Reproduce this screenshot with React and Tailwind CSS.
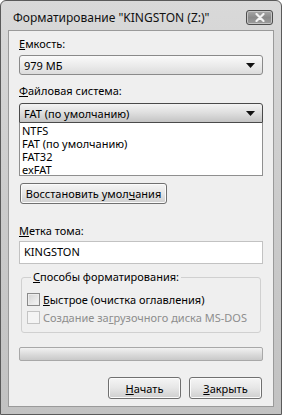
import { useState } from "react";

const font = { fontFamily: '"Noto Sans", "Open Sans", sans-serif' };

function ArrowDown() {
  return (
    <svg width="9" height="5" viewBox="0 0 9 5" className="shrink-0">
      <path d="M0 0 H9 L4.5 5 Z" fill="#111" />
    </svg>
  );
}

function Combo({ value, open }) {
  return (
    <div
      className={
        "flex h-[20px] items-center justify-between rounded-[3px] border pl-[4px] pr-[7px] " +
        (open
          ? "rounded-b-none border-[#4a4a4a] bg-gradient-to-b from-[#f4f4f4] via-[#dedede] to-[#c4c4c4]"
          : "border-[#8a8a8a] bg-gradient-to-b from-[#fafafa] via-[#ececec] to-[#dcdcdc]")
      }
    >
      <span className="whitespace-nowrap text-[11px] leading-none text-black">{value}</span>
      <ArrowDown />
    </div>
  );
}

function Button({ children, className = "" }) {
  return (
    <button
      className={
        "flex items-center justify-center whitespace-nowrap rounded-[3px] border border-[#707070] bg-gradient-to-b from-[#f5f5f5] via-[#e6e6e6] to-[#cfcfcf] text-[11px] leading-none text-black shadow-[inset_0_0_0_1px_#fbfbfb] " +
        className
      }
    >
      <span>{children}</span>
    </button>
  );
}

function Checkbox({ label, disabled, checked, onChange }) {
  return (
    <label className="flex h-[16px] items-center gap-[3px] whitespace-nowrap">
      <span
        onClick={disabled ? undefined : onChange}
        className={
          "h-[13px] w-[13px] shrink-0 border " +
          (disabled
            ? "border-[#c4c4c4] bg-[#f4f4f4]"
            : "border-[#8a8a8a] bg-gradient-to-br from-[#d4d4d4] to-[#f6f6f6] shadow-[inset_0_0_0_1px_#ececec]")
        }
      >
        {checked && (
          <svg width="11" height="11" viewBox="0 0 11 11">
            <path d="M2 5.5 L4.5 8 L9 2.5" stroke="#222" strokeWidth="1.6" fill="none" />
          </svg>
        )}
      </span>
      <span className={"text-[11px] leading-none " + (disabled ? "text-[#8d8d8d]" : "text-black")}>
        {label}
      </span>
    </label>
  );
}

export default function App() {
  const [quick, setQuick] = useState(false);
  const options = ["NTFS", "FAT (по умолчанию)", "FAT32", "exFAT"];

  return (
    <div
      style={font}
      className="flex h-[415px] w-[282px] flex-col rounded-t-[6px] border border-[#5a5a5a] bg-gradient-to-b from-[#d9d9d9] via-[#cbcbcb] to-[#c2c2c2]"
    >
      {/* title bar */}
      <div className="flex h-[29px] items-center justify-between pl-[12px] pr-[8px] pt-[4px]">
        <span className="whitespace-nowrap text-[12px] leading-none text-[#111]">Форматирование "KINGSTON (Z:)"</span>
        <div className="flex h-[15px] w-[27px] items-center justify-center rounded-[3px] border border-[#4d4d4d] bg-gradient-to-b from-[#a8a8a8] via-[#8a8a8a] to-[#9c9c9c] shadow-[inset_0_0_0_1px_#c4c4c4]">
          <svg width="10" height="9" viewBox="0 0 10 9">
            <path d="M1.5 1 L8.5 8 M8.5 1 L1.5 8" stroke="#f2f2f2" strokeWidth="2.2" strokeLinecap="round" />
          </svg>
        </div>
      </div>

      {/* client area */}
      <div className="mx-[7px] mb-[7px] flex flex-1 flex-col border border-[#9a9a9a] bg-[#efefef] px-[10px]">
        <div className="mt-[5px] h-4 text-[11px] leading-4 text-black">
          <u>Е</u>мкость:
        </div>
        <div className="mt-[3px]">
          <Combo value="979 МБ" />
        </div>

        <div className="mt-[8px] h-4 text-[11px] leading-4 text-black">
          <u>Ф</u>айловая система:
        </div>
        <div className="mt-[4px]">
          <Combo value="FAT (по умолчанию)" open />
        </div>
        <ul className="flex h-[53px] flex-col border border-t-0 border-[#8f8f8f] bg-white py-[1px] pl-[2px]">
          {options.map((o) => (
            <li key={o} className="h-[13px] text-[11px] leading-[13px] text-black">
              {o}
            </li>
          ))}
        </ul>

        <Button className="ml-[1px] mt-[7px] h-[21px] w-[147px] self-start">
          Восстановить умол<u>ч</u>ания
        </Button>

        <div className="mt-[19px] h-4 text-[11px] leading-4 text-black">
          <u>М</u>етка тома:
        </div>
        <div className="mt-[2px] flex h-[23px] items-center border border-[#c2c2c2] bg-white pl-[4px] text-[11px] text-black">
          KINGSTON
        </div>

        <fieldset className="mx-[2px] mt-[5px] rounded-[3px] border border-[#d0d0d0] pb-[7px] pl-[5px]">
          <legend className="ml-[4px] px-[2px] text-[11px] leading-4 text-black">
            <u>С</u>пособы форматирования:
          </legend>
          <div className="mt-[6px] flex flex-col gap-[2px]">
            <Checkbox
              label={
                <>
                  <u>Б</u>ыстрое (очистка оглавления)
                </>
              }
              checked={quick}
              onChange={() => setQuick(!quick)}
            />
            <Checkbox
              disabled
              label={
                <>
                  Создание за<u>г</u>рузочного диска MS-DOS
                </>
              }
            />
          </div>
        </fieldset>

        <div className="mt-[14px] h-[14px] rounded-[2px] border border-[#a8a8a8] bg-gradient-to-b from-[#f2f2f2] via-[#dcdcdc] to-[#c9c9c9]" />

        <div className="mt-[16px] flex justify-end gap-[8px] pr-[1px]">
          <Button className="h-[22px] w-[73px]">
            <u>Н</u>ачать
          </Button>
          <Button className="h-[22px] w-[73px]">
            <u>З</u>акрыть
          </Button>
        </div>
      </div>
    </div>
  );
}
